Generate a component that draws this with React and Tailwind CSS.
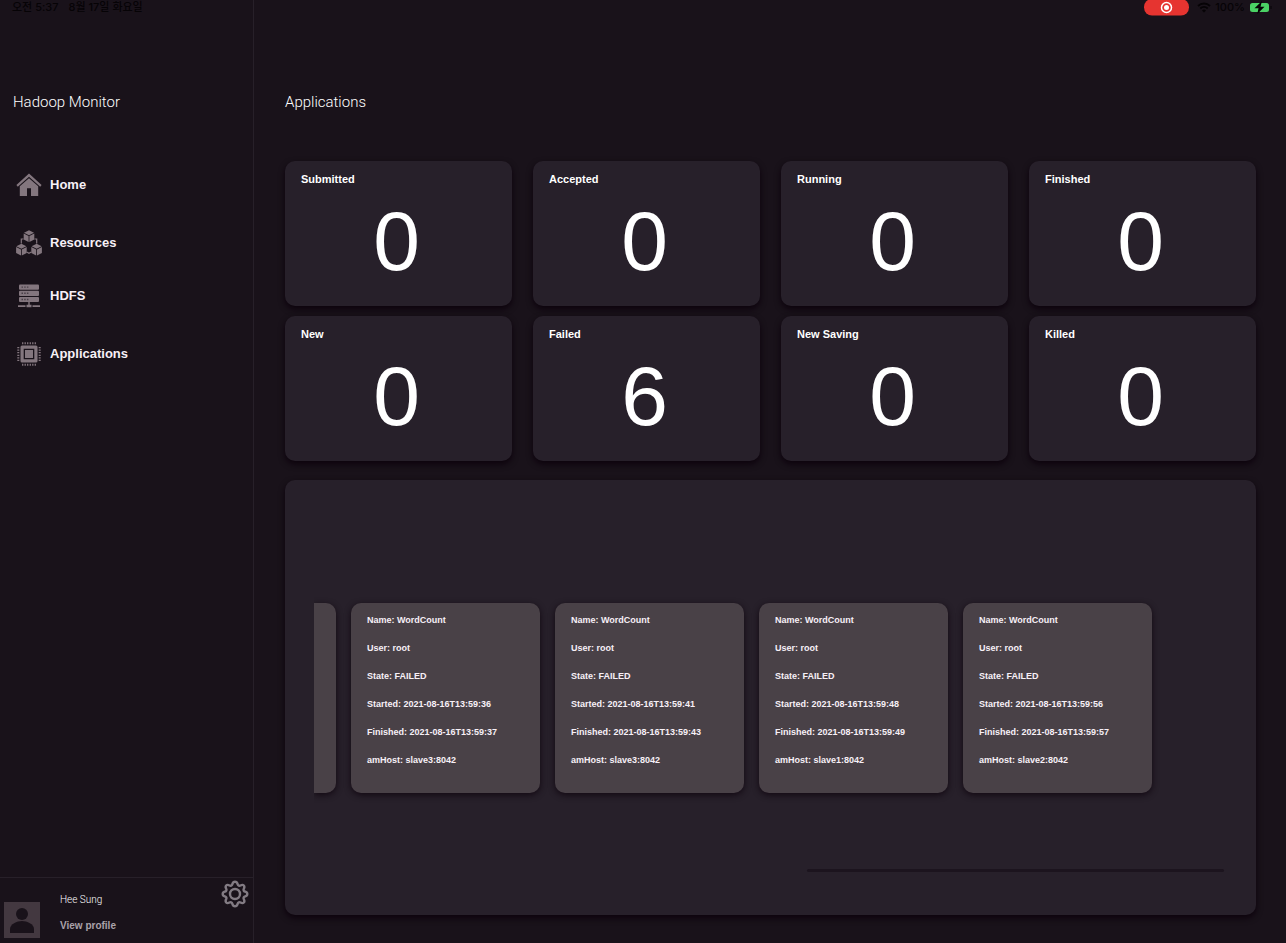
const stats = [
  ["Submitted", 0],
  ["Accepted", 0],
  ["Running", 0],
  ["Finished", 0],
  ["New", 0],
  ["Failed", 6],
  ["New Saving", 0],
  ["Killed", 0],
];

const jobs = [
  { started: "2021-08-16T13:59:36", finished: "2021-08-16T13:59:37", host: "slave3:8042" },
  { started: "2021-08-16T13:59:41", finished: "2021-08-16T13:59:43", host: "slave3:8042" },
  { started: "2021-08-16T13:59:48", finished: "2021-08-16T13:59:49", host: "slave1:8042" },
  { started: "2021-08-16T13:59:56", finished: "2021-08-16T13:59:57", host: "slave2:8042" },
];

function HomeIcon() {
  return (
    <svg viewBox="0 0 26 26" className="size-[26px]" fill="currentColor" aria-hidden="true">
      <path d="M13 1.600 .4 13l1.400 1.700L13 4.700l11.200 10 1.400-1.700z" />
      <path d="M13 6.200 3.800 14.300V24H11v-7.800h4V24h7.200v-9.700z" />
    </svg>
  );
}

function Cube({ x, y }) {
  return (
    <g transform={`translate(${x} ${y})`}>
      <path d="M0-6 5-3.500 0-1-5-3.500z" />
      <path d="M-5.300-2.700-.4-.2v6L-5.300 3.300z" />
      <path d="M5.300-2.700.4-.2v6L5.300 3.300z" />
    </g>
  );
}

function CubesIcon() {
  return (
    <svg viewBox="0 0 26 26" className="size-[26px]" fill="currentColor" aria-hidden="true">
      <Cube x={13} y={6.300} />
      <Cube x={5.400} y={19.700} />
      <Cube x={20.600} y={19.700} />
      <path d="M7.500 9H5.300v4.500M18.500 9h2.200v4.500M10.700 22l2.300 1.300 2.300-1.300" fill="none" stroke="currentColor" strokeWidth="1.200" />
    </svg>
  );
}

function ServerIcon() {
  return (
    <svg viewBox="0 0 26 26" className="size-[26px]" fill="currentColor" aria-hidden="true">
      {[1.500, 7.700, 13.900].map((y) => (
        <g key={y}>
          <rect x="3" y={y} width="20" height="5.200" rx="1" />
          <path d={`M5.500 ${y + 2.600}h1.500m1.200 0h1.500m1.200 0h1.500`} stroke="#4a4049" strokeWidth="1.400" />
        </g>
      ))}
      <path d="M12.300 19h1.400v2.700h1.800v2.600h-5v-2.600h1.800zM2 22.300h7.500v1.600H2zM16.500 22.300H24v1.600h-7.500z" />
    </svg>
  );
}

function ChipIcon() {
  return (
    <svg viewBox="0 0 26 26" className="size-[26px]" fill="currentColor" aria-hidden="true">
      <path fillRule="evenodd" d="M6 4.500h14A1.500 1.500 0 0 1 21.500 6v14a1.500 1.500 0 0 1-1.500 1.500H6A1.500 1.500 0 0 1 4.500 20V6A1.500 1.500 0 0 1 6 4.500zM7.700 7.700v10.600h10.600V7.700z" />
      <path d="M9 9h8v8H9z" />
      <path
        d="M6.700 1.300v2M9.200 1.300v2M11.700 1.300v2M14.300 1.300v2M16.800 1.300v2M19.300 1.300v2M6.700 22.700v2M9.200 22.700v2M11.700 22.700v2M14.300 22.700v2M16.800 22.700v2M19.300 22.700v2M1.300 6.700h2M1.300 9.200h2M1.300 11.700h2M1.300 14.300h2M1.300 16.800h2M1.300 19.300h2M22.700 6.700h2M22.700 9.200h2M22.700 11.700h2M22.700 14.300h2M22.700 16.800h2M22.700 19.300h2"
        stroke="currentColor"
        strokeWidth="1.300"
      />
    </svg>
  );
}

function GearIcon() {
  return (
    <svg viewBox="0 0 28 28" className="size-7" fill="none" stroke="currentColor" strokeWidth="2.400" strokeLinejoin="round" aria-hidden="true">
      <path d="M14 1.800c2.200 0 2.200 1 2.700 2.600.4 1.200 1.700 1.700 2.800 1.100 1.400-.8 2.200-1.200 3.300 0s.8 1.900 0 3.300c-.6 1.100-.1 2.400 1.100 2.700 1.600.5 2.400.6 2.400 2.500s-.8 2-2.400 2.500c-1.200.3-1.700 1.600-1.100 2.700.8 1.400 1.100 2.100 0 3.300s-1.900.8-3.300 0c-1.100-.6-2.400-.1-2.800 1.100-.5 1.600-.5 2.600-2.700 2.600s-2.200-1-2.700-2.600c-.4-1.200-1.700-1.700-2.800-1.100-1.400.8-2.200 1.200-3.300 0s-.8-1.900 0-3.300c.6-1.100.1-2.400-1.100-2.700C2.500 16 1.700 15.900 1.700 14s.8-2 2.400-2.500c1.200-.3 1.700-1.600 1.100-2.700-.8-1.400-1.100-2.100 0-3.300s1.900-.8 3.300 0c1.100.6 2.400.1 2.800-1.100.5-1.600.5-2.600 2.700-2.600z" />
      <circle cx="14" cy="14" r="5" />
    </svg>
  );
}

const nav = [
  ["Home", HomeIcon],
  ["Resources", CubesIcon],
  ["HDFS", ServerIcon],
  ["Applications", ChipIcon],
];

export default function App() {
  return (
    <div className="flex min-h-screen bg-[#19121a] font-['Liberation_Sans',sans-serif] text-[#f7f0f7]">
      <aside className="flex w-[254px] shrink-0 flex-col border-r border-[#272029]">
        <div className="flex h-[14px] items-center gap-[10px] pl-3 font-['Inter','Noto_Sans_CJK_KR',sans-serif] text-[11px] leading-[14px] font-medium text-[#060306]">
          <span>오전 5:37</span>
          <span>8월 17일 화요일</span>
        </div>
        <h1 className="mt-[76px] pl-[13px] font-[Roboto,sans-serif] text-[15px] leading-6 font-light text-white">Hadoop Monitor</h1>
        <nav className="mt-[58px]">
          <ul className="flex flex-col gap-[27px] pl-4">
            {nav.map(([label, Icon]) => (
              <li key={label} className="even:pt-[5px]">
                <a href="#" className="flex items-center gap-2 text-[13px] leading-[26px] font-bold">
                  <span className="text-[#83767e]"><Icon /></span>
                  {label}
                </a>
              </li>
            ))}
          </ul>
        </nav>
        <div className="mt-auto flex h-[66px] border-t border-[#272029] pl-1">
          <svg viewBox="0 0 36 36" className="mt-6 size-9" aria-hidden="true">
            <path d="M0 0h36v36H0z" fill="#433840" />
            <circle cx="18" cy="12" r="6" fill="#19121a" />
            <path d="M6 31v-4c0-5 7-8 12-8s12 3 12 8v4z" fill="#19121a" />
          </svg>
          <div className="ml-5 flex flex-col gap-2 pt-[13px]">
            <span className="font-[Roboto,sans-serif] text-[10px] leading-[18px] font-light text-white">Hee Sung</span>
            <a href="#" className="text-[10px] leading-[18px] font-bold text-[#aaa2aa]">View profile</a>
          </div>
          <button type="button" aria-label="Settings" className="mt-[2px] mr-1 ml-auto self-start text-[#827b83]">
            <GearIcon />
          </button>
        </div>
      </aside>

      <main className="flex min-w-0 flex-1 flex-col pr-[30px] pb-7 pl-[31px]">
        <div className="-mr-[17px] flex h-4 items-start justify-end font-[Inter,sans-serif] text-[11px] leading-[15px] font-medium text-[#060306]">
          <svg viewBox="0 0 45 16" className="mr-2 h-4 w-[45px]" aria-hidden="true">
            <rect y="-1" width="45" height="16.500" rx="8" fill="#e63430" />
            <circle cx="22.500" cy="7.500" r="5" fill="none" stroke="#fff" strokeWidth="1.500" />
            <circle cx="22.500" cy="7.500" r="2.500" fill="#fff" />
          </svg>
          <svg viewBox="0 0 14 14" className="mr-1 size-[14px]" fill="none" stroke="currentColor" strokeWidth="1.800" aria-hidden="true">
            <path d="M1 6a8.500 8.500 0 0 1 12 0M3.300 8.500a5.200 5.200 0 0 1 7.400 0" />
            <path d="M7 12.500 5 10.500a2.800 2.800 0 0 1 4 0z" fill="currentColor" stroke="none" />
          </svg>
          <span>100%</span>
          <svg viewBox="0 0 24 14" className="ml-1 h-[14px] w-6" aria-hidden="true">
            <rect x="1" y="3" width="19" height="9" rx="2.500" fill="#4bd265" />
            <path d="M13 1 5.500 8.300h4L8.300 14 15.500 6.700h-4z" fill="#060306" />
            <path d="M22 6v3" stroke="#060306" />
          </svg>
        </div>
        <h2 className="mt-[74px] font-[Roboto,sans-serif] text-[15px] leading-6 font-light text-white">Applications</h2>

        <section className="mt-[47px] grid grid-cols-4 gap-x-[21px] gap-y-[10px]">
          {stats.map(([label, value]) => (
            <div key={label} className="flex h-[145px] flex-col rounded-[10px] bg-[#27202a] px-4 pt-[10px] shadow-[0_3px_6px_#0c020c]">
              <h3 className="text-[11px] leading-4 font-bold text-white">{label}</h3>
              <p className="mt-[10px] pr-1 text-center text-[84px] leading-[88px] text-white">{value}</p>
            </div>
          ))}
        </section>

        <section className="mt-[19px] flex min-h-[400px] flex-1 flex-col rounded-[10px] bg-[#27202a] px-[29px] shadow-[0_3px_6px_#0c020c]">
          <ul className="mt-[113px] flex gap-[15px] overflow-hidden py-[10px]">
            <li className="h-[190px] w-[22px] shrink-0 rounded-r-[10px] bg-[#494147] shadow-[0_2px_6px_#120812]" />
            {jobs.map((job) => (
              <li
                key={job.started}
                className="flex h-[190px] w-[189px] shrink-0 flex-col gap-[14px] rounded-[10px] bg-[#494147] px-4 pt-[10px] text-[9px] leading-[14px] font-bold whitespace-nowrap shadow-[0_2px_6px_#120812]"
              >
                <p>Name: WordCount</p>
                <p>User: root</p>
                <p>State: FAILED</p>
                <p>Started: {job.started}</p>
                <p>Finished: {job.finished}</p>
                <p>amHost: {job.host}</p>
              </li>
            ))}
          </ul>
          <div className="mt-auto mr-[3px] mb-[43px] h-[3px] w-[417px] self-end rounded-full bg-[#1c141e]" />
        </section>
      </main>
    </div>
  );
}
